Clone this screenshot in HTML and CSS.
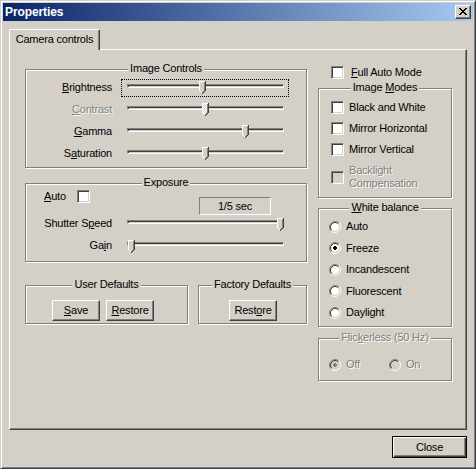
FILE: index.html
```html
<!DOCTYPE html>
<html lang="en">
<head>
<meta charset="utf-8">
<title>Properties</title>
<link rel="stylesheet" href="styles.css">
</head>
<body>
<svg class="defs" width="0" height="0" aria-hidden="true">
  <defs>
    <pattern id="dither" width="2" height="2" patternUnits="userSpaceOnUse">
      <rect width="2" height="2" fill="#D4D0C8"/>
      <rect width="1" height="1" fill="#fff"/>
      <rect x="1" y="1" width="1" height="1" fill="#fff"/>
    </pattern>
    <symbol id="thumb" viewBox="0 0 7 13">
      <path fill="#D4D0C8" d="M1 1h4v9H1z M2 10h2v1H2z"/>
      <path fill="#fff" d="M0 0h6v1H0z M0 1h1v9H0z M1 10h1v1H1z M2 11h1v1H2z"/>
      <path fill="#808080" d="M5 1h1v9H5z M4 10h1v1H4z M3 11h1v1H3z"/>
      <path fill="#404040" d="M6 0h1v10H6z M5 10h1v1H5z M4 11h1v1H4z M3 12h1v1H3z"/>
    </symbol>
    <symbol id="thumb-off" viewBox="0 0 7 13">
      <path fill="url(#dither)" d="M1 1h4v9H1z M2 10h2v1H2z"/>
      <path fill="#fff" d="M0 0h6v1H0z M0 1h1v9H0z M1 10h1v1H1z M2 11h1v1H2z"/>
      <path fill="#808080" d="M5 1h1v9H5z M4 10h1v1H4z M3 11h1v1H3z"/>
      <path fill="#404040" d="M6 0h1v10H6z M5 10h1v1H5z M4 11h1v1H4z M3 12h1v1H3z"/>
    </symbol>
    <symbol id="radio" viewBox="0 0 12 12">
      <circle cx="6" cy="6" r="4" fill="#fff"/>
      <path d="M2.11 9.89A5.5 5.5 0 0 1 9.89 2.11" fill="none" stroke="#808080"/>
      <path d="M9.89 2.11A5.5 5.5 0 0 1 2.11 9.89" fill="none" stroke="#fff"/>
      <path d="M2.82 9.18A4.5 4.5 0 0 1 9.18 2.82" fill="none" stroke="#404040"/>
      <path d="M9.18 2.82A4.5 4.5 0 0 1 2.82 9.18" fill="none" stroke="#D4D0C8"/>
    </symbol>
    <symbol id="radio-off" viewBox="0 0 12 12">
      <circle cx="6" cy="6" r="4" fill="#D4D0C8"/>
      <path d="M2.11 9.89A5.5 5.5 0 0 1 9.89 2.11" fill="none" stroke="#808080"/>
      <path d="M9.89 2.11A5.5 5.5 0 0 1 2.11 9.89" fill="none" stroke="#fff"/>
      <path d="M2.82 9.18A4.5 4.5 0 0 1 9.18 2.82" fill="none" stroke="#404040"/>
      <path d="M9.18 2.82A4.5 4.5 0 0 1 2.82 9.18" fill="none" stroke="#D4D0C8"/>
    </symbol>
  </defs>
</svg>

<div class="window">
  <div class="titlebar">
    <span class="title">Properties</span>
    <span class="tb-btn">
      <svg width="8" height="7" viewBox="0 0 8 7"><path fill="#000" d="M0 0h2v1H0z M6 0h2v1H6z M1 1h2v1H1z M5 1h2v1H5z M2 2h4v1H2z M3 3h2v1H3z M2 4h4v1H2z M1 5h2v1H1z M5 5h2v1H5z M0 6h2v1H0z M6 6h2v1H6z"/></svg>
    </span>
  </div>

  <div class="client">
    <div class="tabs"><div class="tab">Camera controls</div></div>

    <div class="panel">
      <div class="col-left">
        <div class="group g-image">
          <div class="gtitle">Image Controls</div>
          <div class="rows">
            <div class="srow">
              <span class="slabel"><u>B</u>rightness</span>
              <div class="slider focus"><div class="track"></div><svg class="thumb" style="left:78px" viewBox="0 0 7 13"><use href="#thumb"/></svg></div>
            </div>
            <div class="srow">
              <span class="slabel disabled"><u>C</u>ontrast</span>
              <div class="slider"><div class="track"></div><svg class="thumb" style="left:81px" viewBox="0 0 7 13"><use href="#thumb-off"/></svg></div>
            </div>
            <div class="srow">
              <span class="slabel"><u>G</u>amma</span>
              <div class="slider"><div class="track"></div><svg class="thumb" style="left:121px" viewBox="0 0 7 13"><use href="#thumb"/></svg></div>
            </div>
            <div class="srow">
              <span class="slabel">S<u>a</u>turation</span>
              <div class="slider"><div class="track"></div><svg class="thumb" style="left:81px" viewBox="0 0 7 13"><use href="#thumb"/></svg></div>
            </div>
          </div>
        </div>

        <div class="group g-exposure">
          <div class="gtitle">Exposure</div>
          <div class="auto-row">
            <span class="auto-label"><u>A</u>uto</span>
            <span class="check auto-check"></span>
            <div class="readout">1/5 sec</div>
          </div>
          <div class="rows">
            <div class="srow">
              <span class="slabel">Shutter S<u>p</u>eed</span>
              <div class="slider s-exp"><div class="track"></div><svg class="thumb" style="left:156px" viewBox="0 0 7 13"><use href="#thumb"/></svg></div>
            </div>
            <div class="srow">
              <span class="slabel">Ga<u>i</u>n</span>
              <div class="slider s-exp"><div class="track"></div><svg class="thumb" style="left:7px" viewBox="0 0 7 13"><use href="#thumb"/></svg></div>
            </div>
          </div>
        </div>

        <div class="defaults">
          <div class="group g-user">
            <div class="gtitle">User Defaults</div>
            <div class="btns btns-user">
              <button class="btn"><span><u>S</u>ave</span></button>
              <button class="btn"><span><u>R</u>estore</span></button>
            </div>
          </div>
          <div class="group g-factory">
            <div class="gtitle">Factory Defaults</div>
            <div class="btns btns-factory">
              <button class="btn"><span>Rest<u>o</u>re</span></button>
            </div>
          </div>
        </div>
      </div>

      <div class="col-right">
        <div class="full-auto">
          <span class="check"></span>
          <span class="fa-label"><u>F</u>ull Auto Mode</span>
        </div>

        <div class="group g-modes">
          <div class="gtitle">Image <u>M</u>odes</div>
          <div class="checks">
            <div class="crow"><span class="check"></span><span class="clabel">Black and White</span></div>
            <div class="crow"><span class="check"></span><span class="clabel">Mirror Horizontal</span></div>
            <div class="crow"><span class="check"></span><span class="clabel">Mirror Vertical</span></div>
            <div class="crow"><span class="check check-off"></span><span class="clabel disabled">Backlight Compensation</span></div>
          </div>
        </div>

        <div class="group g-wb">
          <div class="gtitle"><u>W</u>hite balance</div>
          <div class="radios">
            <div class="rrow"><svg class="radio" viewBox="0 0 12 12"><use href="#radio"/></svg><span class="rlabel">Auto</span></div>
            <div class="rrow"><svg class="radio" viewBox="0 0 12 12"><use href="#radio"/><path fill="#000" d="M5 4h2v1h1v2h-1v1h-2v-1h-1v-2h1z"/></svg><span class="rlabel">Freeze</span></div>
            <div class="rrow"><svg class="radio" viewBox="0 0 12 12"><use href="#radio"/></svg><span class="rlabel">Incandescent</span></div>
            <div class="rrow"><svg class="radio" viewBox="0 0 12 12"><use href="#radio"/></svg><span class="rlabel">Fluorescent</span></div>
            <div class="rrow"><svg class="radio" viewBox="0 0 12 12"><use href="#radio"/></svg><span class="rlabel">Daylight</span></div>
          </div>
        </div>

        <div class="group g-flicker">
          <div class="gtitle disabled">Flic<u>k</u>erless (50 Hz)</div>
          <div class="flick-row">
            <div class="rrow r-off"><svg class="radio" viewBox="0 0 12 12"><use href="#radio-off"/><path fill="#808080" d="M5 4h2v1h1v2h-1v1h-2v-1h-1v-2h1z"/></svg><span class="rlabel disabled">Off</span></div>
            <div class="rrow"><svg class="radio" viewBox="0 0 12 12"><use href="#radio-off"/></svg><span class="rlabel disabled">On</span></div>
          </div>
        </div>
      </div>
    </div>

    <div class="footer">
      <button class="btn btn-default"><span>Close</span></button>
    </div>
  </div>
</div>
</body>
</html>
```

FILE: styles.css
```css
* { box-sizing: border-box; }

html, body {
  margin: 0;
  padding: 0;
  background: #D4D0C8;
}

body {
  font-family: "Liberation Sans", Arial, sans-serif;
  font-size: 11px;
  line-height: 13px;
  letter-spacing: -0.2px;
  color: #000;
}

.defs {
  display: block;
  width: 0;
  height: 0;
  overflow: hidden;
}

u { text-decoration: underline; text-underline-offset: 1px; }

.disabled {
  color: #808080;
  text-shadow: 1px 1px 0 #fff;
}

/* window frame */
.window {
  width: 476px;
  height: 469px;
  background: #D4D0C8;
  border: 1px solid;
  border-color: #D4D0C8 #404040 #404040 #D4D0C8;
  box-shadow: inset 1px 1px #fff, inset -1px -1px #808080;
  padding: 2px;
  display: flex;
  flex-direction: column;
}

.titlebar {
  height: 18px;
  flex: none;
  background: linear-gradient(to right, #0A246A, #A6CAF0);
  display: flex;
  align-items: center;
  justify-content: space-between;
  padding: 0 2px 0 2px;
}

.title {
  color: #fff;
  font-weight: bold;
  font-size: 12px;
  letter-spacing: -0.1px;
  line-height: 18px;
}

.tb-btn {
  width: 16px;
  height: 14px;
  background: #D4D0C8;
  border: 1px solid;
  border-color: #fff #404040 #404040 #fff;
  box-shadow: inset -1px -1px #808080;
  padding: 2px 0 0 3px;
  display: block;
}

.tb-btn svg { display: block; }

.client {
  flex: 1;
  padding: 8px 6px 0 6px;
  display: flex;
  flex-direction: column;
}

/* tabs */
.tabs { display: flex; }

.tab {
  width: 91px;
  height: 21px;
  border: 1px solid;
  border-color: #fff #404040 transparent #fff;
  border-bottom: none;
  border-radius: 2px 2px 0 0;
  box-shadow: inset -1px 0 #808080;
  background: #D4D0C8;
  padding-top: 3px;
  text-align: center;
  position: relative;
  z-index: 1;
}

.panel {
  margin-top: -1px;
  width: 458px;
  height: 381px;
  flex: none;
  border: 1px solid;
  border-color: #fff #404040 #404040 #fff;
  box-shadow: inset -1px -1px #808080;
  padding-left: 15px;
  display: flex;
  gap: 11px;
}

.col-left { width: 282px; flex: none; }
.col-right { width: 134px; flex: none; }

/* group boxes */
.group {
  border: 1px solid #808080;
  box-shadow: inset 1px 1px #fff, 1px 1px #fff;
}

.gtitle {
  width: max-content;
  margin: -8px auto 0;
  padding: 0 2px;
  background: #D4D0C8;
  line-height: 13px;
}

.g-image {
  margin-top: 19px;
  padding-bottom: 4px;
}

.g-image .rows { margin-top: 4px; }

.rows {
  display: flex;
  flex-direction: column;
  gap: 4px;
}

.srow {
  display: flex;
  height: 18px;
}

.slabel {
  width: 86px;
  margin-right: 9px;
  margin-top: 2px;
  text-align: right;
  flex: none;
}

.slider {
  width: 168px;
  height: 18px;
  position: relative;
  padding: 5px 5px 0 6px;
  flex: none;
}

.slider.focus {
  outline: 1px dotted #000;
  outline-offset: -1px;
}

.track {
  height: 4px;
  border: 1px solid;
  border-color: #808080 #fff #fff #808080;
  box-shadow: inset 1px 1px #404040;
  background: #D4D0C8;
}

.thumb {
  position: absolute;
  top: 2px;
  width: 7px;
  height: 13px;
  display: block;
}

.s-exp .thumb { top: 3px; }

/* exposure */
.g-exposure {
  margin-top: 15px;
  padding-bottom: 6px;
}

.auto-row {
  display: flex;
  height: 26px;
  padding-left: 18px;
}

.auto-label {
  width: 33px;
  margin-top: 1px;
}

.auto-check { margin-top: 1px; }

.readout {
  width: 72px;
  height: 18px;
  margin-left: 109px;
  margin-top: 8px;
  border: 1px solid;
  border-color: #808080 #fff #fff #808080;
  text-align: center;
  line-height: 16px;
}

/* checkbox */
.check {
  width: 13px;
  height: 13px;
  flex: none;
  display: block;
  background: #fff;
  border: 1px solid;
  border-color: #808080 #fff #fff #808080;
  box-shadow: inset 1px 1px #404040, inset -1px -1px #D4D0C8;
}

.check-off { background: #D4D0C8; }

/* defaults */
.defaults {
  display: flex;
  gap: 10px;
  margin-top: 23px;
}

.g-user { width: 163px; padding-bottom: 2px; }
.g-factory { width: 109px; padding-bottom: 2px; }

.btns {
  display: flex;
  gap: 6px;
  margin-top: 9px;
}

.btns-user { padding-left: 26px; }
.btns-factory { padding-left: 30px; }

.btn {
  width: 48px;
  height: 21px;
  padding: 0;
  margin: 0;
  font: inherit;
  letter-spacing: inherit;
  color: #000;
  background: #D4D0C8;
  border: 1px solid;
  border-color: #fff #404040 #404040 #fff;
  box-shadow: inset -1px -1px #808080;
  display: flex;
  align-items: center;
  justify-content: center;
}

/* right column */
.full-auto {
  display: flex;
  align-items: center;
  height: 13px;
  margin-top: 16px;
  padding-left: 13px;
}

.fa-label { margin-left: 7px; }

.g-modes {
  margin-top: 9px;
  padding-bottom: 7px;
}

.checks {
  display: flex;
  flex-direction: column;
  gap: 8px;
  margin-top: 7px;
  padding-left: 12px;
  padding-right: 4px;
}

.crow {
  display: flex;
  align-items: center;
}

.clabel { margin-left: 5px; }

.g-wb {
  margin-top: 10px;
  padding-bottom: 7px;
}

.radios {
  display: flex;
  flex-direction: column;
  gap: 8.6px;
  margin-top: 6px;
  padding-left: 10px;
}

.rrow {
  display: flex;
  align-items: center;
  height: 13px;
}

.radio {
  width: 12px;
  height: 12px;
  display: block;
  flex: none;
}

.rlabel { margin-left: 5px; }

.g-flicker {
  margin-top: 11px;
  padding-bottom: 9px;
}

.flick-row {
  display: flex;
  margin-top: 14px;
  padding-left: 10px;
}

.r-off { width: 60px; }

/* footer */
.footer {
  display: flex;
  justify-content: flex-end;
  margin-top: 6px;
}

.btn-default {
  width: 75px;
  height: 22px;
  border: 1px solid #000;
  box-shadow: inset 1px 1px #fff, inset -1px -1px #404040, inset -2px -2px #808080;
}
```
